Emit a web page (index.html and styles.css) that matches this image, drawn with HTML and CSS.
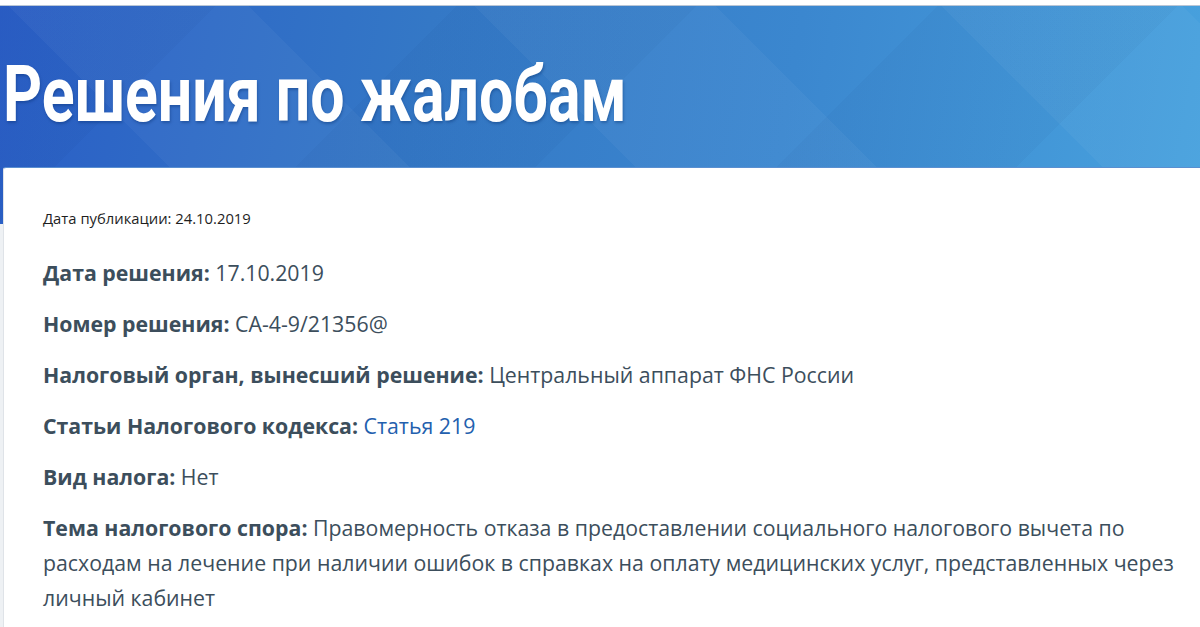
FILE: index.html
```html
<!DOCTYPE html>
<html lang="ru">
<head>
  <meta charset="UTF-8">
  <title>Решения по жалобам</title>
  <link rel="stylesheet" href="styles.css">
</head>
<body>
  <div class="page">
    <div class="hero">
      <h1 class="hero-title">Решения по жалобам</h1>
    </div>

    <div class="card">
      <div class="pub-date">Дата публикации: 24.10.2019</div>

      <p class="field"><b>Дата решения:</b> 17.10.2019</p>
      <p class="field"><b>Номер решения:</b> СА-4-9/21356@</p>
      <p class="field"><b>Налоговый орган, вынесший решение:</b> Центральный аппарат ФНС России</p>
      <p class="field"><b>Статьи Налогового кодекса:</b> <a href="#">Статья 219</a></p>
      <p class="field"><b>Вид налога:</b> Нет</p>
      <p class="field"><b>Тема налогового спора:</b> Правомерность отказа в предоставлении социального налогового вычета по расходам на лечение при наличии ошибок в справках на оплату медицинских услуг, представленных через личный кабинет</p>
    </div>
  </div>
</body>
</html>
```

FILE: styles.css
```css
* {
  margin: 0;
  padding: 0;
  box-sizing: border-box;
}

html, body {
  height: 100%;
  overflow: hidden;
}

body {
  font-family: "Open Sans", Arial, sans-serif;
  background: #eef1f4;
  border-top: 5px solid #ffffff;
}

.page {
  position: relative;
}

.hero {
  height: 219px;
  border-top: 1px solid #b9c6d6;
  background:
    repeating-linear-gradient(45deg, rgba(255,255,255,0) 0 160px, rgba(255,255,255,0.035) 160px 330px),
    repeating-linear-gradient(-45deg, rgba(0,0,0,0) 0 170px, rgba(0,30,90,0.035) 170px 340px),
    linear-gradient(100deg, #2a5ec6 0%, #3478c6 35%, #3b87cf 65%, #48a2de 100%);
  padding: 44px 0 0 3px;
}

.hero-title {
  font-family: "Roboto", "Open Sans", sans-serif;
  font-weight: 700;
  font-size: 77px;
  line-height: 90px;
  color: #ffffff;
  white-space: nowrap;
  transform: scaleX(0.79);
  transform-origin: left center;
  text-shadow: 1px 2px 3px rgba(0, 40, 100, 0.35);
}

.card {
  margin: -57px 0 0 3px;
  background: #ffffff;
  border-top: 1px solid #5a8fd0;
  border-left: 1px solid #dfe3e8;
  border-top-left-radius: 3px;
  min-height: 500px;
  padding: 40px 20px 0 39px;
  color: #3c4e5c;
}

.pub-date {
  font-size: 14.8px;
  color: #1e1e1e;
  margin-bottom: 27px;
}

.field {
  font-size: 21.3px;
  line-height: 35px;
  margin-bottom: 16px;
}

.field b {
  font-weight: 700;
}

.field a {
  color: #2360ae;
  text-decoration: none;
}
```
